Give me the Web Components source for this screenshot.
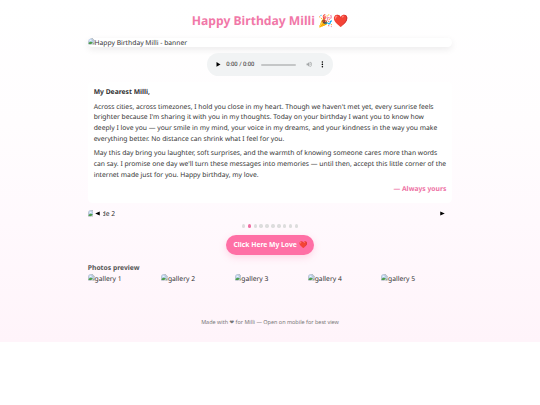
<!DOCTYPE html>
<html lang="en">
<head>
<meta charset="utf-8">
<title>Happy Birthday Milli</title>
<style>
  html { background: #fff; }

  body {
    margin: 0;
    font: 6.75px/10.8px "Noto Sans", "Liberation Sans", sans-serif;
    color: #333;
    text-rendering: geometricPrecision;
  }
</style>
</head>
<body>
<birthday-page>
  <page-title>Happy Birthday Milli 🎉❤️</page-title>
  <banner-card><photo-alt>Happy Birthday Milli - banner</photo-alt></banner-card>
  <audio-player time="0:00 / 0:00"></audio-player>
  <love-letter>
    <strong slot="greeting">My Dearest Milli,</strong>
    <span slot="first">Across cities, across timezones, I hold you close in my heart. Though we haven't met yet, every sunrise feels<br>brighter because I'm sharing it with you in my thoughts. Today on your birthday I want you to know how<br>deeply I love you — your smile in my mind, your voice in my dreams, and your kindness in the way you make<br>everything better. No distance can shrink what I feel for you.</span>
    <span slot="second">May this day bring you laughter, soft surprises, and the warmth of knowing someone cares more than words<br>can say. I promise one day we'll turn these messages into memories — until then, accept this little corner of the<br>internet made just for you. Happy birthday, my love.</span>
    <span slot="sign">— Always yours</span>
  </love-letter>
  <photo-slider count="10" current="1">de 2</photo-slider>
  <love-button>Click Here My Love ❤️</love-button>
  <photo-gallery heading="Photos preview">
    <photo-alt>gallery 1</photo-alt>
    <photo-alt>gallery 2</photo-alt>
    <photo-alt>gallery 3</photo-alt>
    <photo-alt>gallery 4</photo-alt>
    <photo-alt>gallery 5</photo-alt>
  </photo-gallery>
  <page-footer>Made with ❤ for Milli — Open on mobile for best view</page-footer>
</birthday-page>

<script>
function define(name, html, setup) {
  const template = document.createElement('template');
  template.innerHTML = html;

  customElements.define(name, class extends HTMLElement {
    constructor() {
      super();
      this.attachShadow({ mode: 'open' });
      this.shadowRoot.appendChild(template.content.cloneNode(true));
    }

    connectedCallback() {
      if (setup) setup(this, this.shadowRoot);
    }
  });
}

// small torn picture icon, shared by the photos and the slider
const pictureIcon = `
<svg class="icon" viewBox="0 0 16 16" aria-hidden="true">
  <path d="M1 1h9.500l4.500 4.500V8L8 15H1z" fill="#bdd3ee" stroke="#9aa3ab" stroke-width="1.200"/>
  <path d="M10.500 1v4.500H15z" fill="#fff" stroke="#9aa3ab"/>
  <ellipse cx="6" cy="5.500" rx="2.500" ry="1.300" fill="#fff"/>
  <path d="M1.500 14.500V12C4 8.500 8 7.500 11.500 10.500l-4 4z" fill="#4f9e4b"/>
  <path d="M15 10v5h-4.500z" fill="#7fb07c" stroke="#9aa3ab"/>
</svg>`;

define('birthday-page', `
<style>
  :host {
    display: flex;
    flex-direction: column;
    box-sizing: border-box;
    height: 341.600px;
    padding: 0 87.800px;
    background: linear-gradient(180deg, #fff 0%, #fffdfe 36%, #fff9fd 65%, #fff4fa 100%);
  }
</style>
<slot></slot>`);

define('page-title', `
<style>
  :host {
    display: block;
    margin-top: 11px;
    text-align: center;
    font-size: 12.150px;
    font-weight: 700;
    line-height: 19px;
    color: #f178a8;
    white-space: nowrap;
  }
</style>
<slot></slot>`);

define('photo-alt', `
<style>
  :host {
    display: flex;
    align-items: flex-start;
    height: 9.200px;
    line-height: 9.200px;
    border-radius: 3.400px;
    overflow: hidden;
    white-space: nowrap;
  }
  .icon { width: 6.750px; height: 6.750px; flex: none; }
</style>
${pictureIcon}<slot></slot>`);

define('banner-card', `
<style>
  :host {
    display: block;
    margin-top: 8.200px;
    border-radius: 5px;
    background: #fff;
    box-shadow: 0 2.500px 7.600px rgba(0,0,0,0.08);
    overflow: hidden;
  }
</style>
<slot></slot>`);

define('audio-player', `
<style>
  :host {
    display: flex;
    align-items: center;
    align-self: center;
    box-sizing: border-box;
    width: 126.500px;
    height: 22.800px;
    margin-top: 6px;
    padding: 0 7.500px 0 8.200px;
    border-radius: 11.400px;
    background: #f1f3f4;
    font-family: Roboto, sans-serif;
    font-size: 5.910px;
    color: #222;
  }
  svg { flex: none; width: 6.750px; height: 6.750px; }
  .time { margin-left: 4.600px; padding-top: 1.400px; white-space: nowrap; }
  .track { flex: 1; height: 1.500px; margin: 0 10px 0 6.500px; border-radius: 1px; background: #c4c6c7; }
  .menu { margin-left: 6.700px; }
</style>
<svg viewBox="0 0 16 16"><path d="M3.500 2.500v11L13 8z" fill="#000"/></svg>
<span class="time"></span>
<div class="track"></div>
<svg viewBox="0 0 24 24" fill="#a5a8a9">
  <path d="M2 9v6h4l6 6V3L6 9z"/>
  <path d="M14 7.500v9c3-1.500 3-7.500 0-9z"/>
  <path d="M14 3v2.200c7 2 7 11.600 0 13.600V21c10-2.500 10-15.500 0-18z"/>
</svg>
<svg class="menu" viewBox="0 0 16 16"><circle cx="8" cy="2.600" r="1.800"/><circle cx="8" cy="8" r="1.800"/><circle cx="8" cy="13.400" r="1.800"/></svg>`,
(el, root) => {
  root.querySelector('.time').textContent = el.getAttribute('time');
});

define('love-letter', `
<style>
  :host {
    display: block;
    box-sizing: border-box;
    height: 121px;
    margin-top: 6.200px;
    padding: 5.100px 5.900px;
    border-radius: 4.200px;
    background: rgba(255,255,255,0.88);
    white-space: nowrap;
  }
  p { margin: 0 0 3.400px; }
  .sign { text-align: right; font-weight: 700; color: #ee73a5; }
</style>
<p><slot name="greeting"></slot></p>
<p><slot name="first"></slot></p>
<p><slot name="second"></slot></p>
<p class="sign"><slot name="sign"></slot></p>`);

define('photo-slider', `
<style>
  :host { display: block; margin-top: 5.400px; }
  .slide {
    display: flex;
    align-items: center;
    height: 9.500px;
    line-height: 9.500px;
  }
  .frame { width: 4.800px; height: 7.500px; border-radius: 3.400px 0 0 0; overflow: hidden; }
  .icon { display: block; width: 6.750px; height: 6.750px; }
  .arrow { width: 5px; height: 5px; }
  .prev { margin: 0.500px 2.900px 0 2.600px; }
  .next { margin: 0.500px 7px 0 auto; }
  .word {
    display: flex;
    justify-content: flex-end;
    width: 12px;
    overflow: hidden;
    white-space: nowrap;
  }
  .dots { display: flex; justify-content: center; gap: 2.550px; margin-top: 6.200px; }
  .dots i { width: 3.370px; height: 3.370px; border-radius: 50%; background: #ddd; }
  .dots i.on { background: #ee6fa3; }
</style>
<div class="slide">
  <div class="frame">${pictureIcon}</div>
  <svg class="arrow prev" viewBox="0 0 10 10"><path d="M9.500 1v8L.5 5z"/></svg>
  <div class="word"><slot></slot></div>
  <svg class="arrow next" viewBox="0 0 10 10"><path d="M.5 1v8l9-4z"/></svg>
</div>
<div class="dots"></div>`,
(el, root) => {
  const dots = root.querySelector('.dots');
  for (let i = 0; i < Number(el.getAttribute('count')); i++) {
    const dot = document.createElement('i');
    if (i === Number(el.getAttribute('current'))) dot.className = 'on';
    dots.appendChild(dot);
  }
});

define('love-button', `
<style>
  :host { display: flex; justify-content: center; margin-top: 7.500px; }
  button {
    width: 88.600px;
    height: 20px;
    padding: 0;
    border: 0;
    border-radius: 10px;
    font: 700 6.750px/20px "Noto Sans", sans-serif;
    color: #fff;
    white-space: nowrap;
    background: #ff6fa5;
    box-shadow: 0 2.500px 7.600px rgba(255,111,165,0.25);
  }
</style>
<button><slot></slot></button>`);

define('photo-gallery', `
<style>
  :host { display: block; margin-top: 7.300px; }
  h3 { margin: 0; font-size: 6.750px; line-height: 10.800px; color: #555; }
  .grid {
    display: grid;
    grid-template-columns: repeat(5, 1fr);
    gap: 2.530px;
    margin-top: 0.800px;
  }
</style>
<h3></h3>
<div class="grid"><slot></slot></div>`,
(el, root) => {
  root.querySelector('h3').textContent = el.getAttribute('heading');
});

define('page-footer', `
<style>
  :host {
    display: block;
    margin-top: 34.300px;
    text-align: center;
    font-size: 5.480px;
    line-height: 9px;
    color: #777;
  }
</style>
<slot></slot>`);
</script>
</body>
</html>
